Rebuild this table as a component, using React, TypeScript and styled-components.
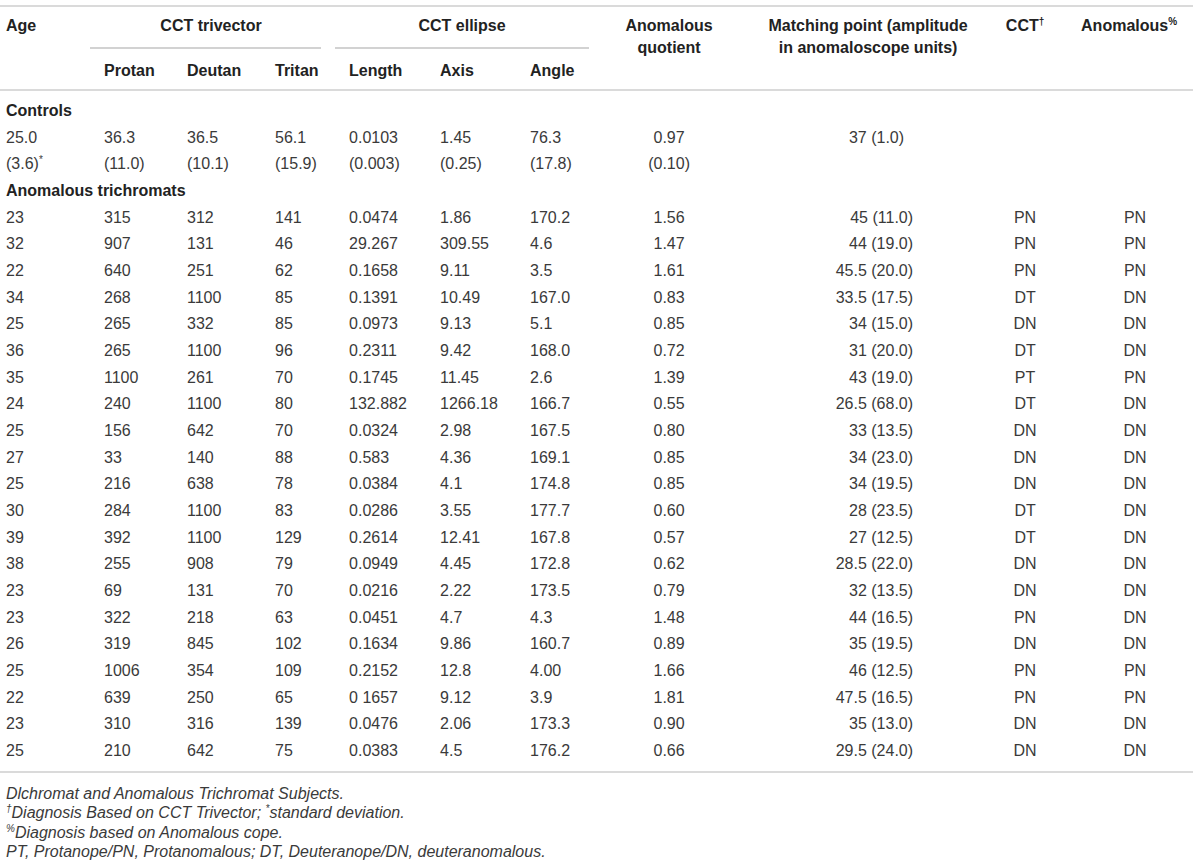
import React from "react";
import styled, { createGlobalStyle } from "styled-components";

const Global = createGlobalStyle`
  html, body { margin: 0; padding: 0; background: #fff; }
  body { font-family: "Liberation Sans", Arial, Helvetica, sans-serif; color: #3a3a3a; }
`;

const Page = styled.div`
  width: 1200px;
  padding-top: 5px;
`;

const Table = styled.table`
  width: 1193px;
  border-collapse: collapse;
  table-layout: fixed;
  font-size: 16px;
  border-top: 2px solid #dadada;
  border-bottom: 2px solid #dadada;
`;

type Align = "left" | "center" | "right";

const Th = styled.th<{ $align?: Align; $pl?: number; $pr?: number }>`
  font-weight: 700;
  color: #222;
  line-height: 22px;
  text-align: ${(p) => p.$align ?? "left"};
  vertical-align: top;
  padding: 8px ${(p) => p.$pr ?? 0}px 0 ${(p) => p.$pl ?? 0}px;
  border-bottom: 2px solid #dadada;
`;

const GroupTh = styled.th`
  font-weight: 700;
  color: #222;
  line-height: 22px;
  vertical-align: top;
  padding: 8px 14px 0 0;
`;

const GroupRule = styled.div<{ $pl?: number }>`
  text-align: center;
  padding: 0 0 10px ${(p) => p.$pl ?? 0}px;
  border-bottom: 2px solid #d2d2d2;
`;

const SubTh = styled.th`
  font-weight: 700;
  color: #222;
  line-height: 22px;
  text-align: left;
  vertical-align: top;
  padding: 11px 0 7px 14px;
  border-bottom: 2px solid #dadada;
`;

const Body = styled.tbody`
  tr:first-child td { padding-top: 7px; }
  tr:last-child td { padding-bottom: 6px; }
`;

const Td = styled.td<{ $align?: Align; $pl?: number; $pr?: number }>`
  line-height: 26.667px;
  white-space: nowrap;
  text-align: ${(p) => p.$align ?? "left"};
  padding: 0 ${(p) => p.$pr ?? 0}px 0 ${(p) => p.$pl ?? 0}px;
  color: #3a3a3a;
`;

const LabelCell = styled.td`
  line-height: 26.667px;
  font-weight: 700;
  color: #222;
  padding: 0 0 0 6px;
  white-space: nowrap;
`;

const Sup = styled.sup`
  font-size: 10px;
  line-height: 0;
  vertical-align: 6px;
`;

const Notes = styled.div`
  margin-top: 11px;
  padding-left: 6px;
  font-size: 16px;
  font-style: italic;
  line-height: 19.4px;
  color: #3a3a3a;
`;

const Note = styled.div``;

const colWidths = [90, 83, 88, 74, 91, 90, 87, 132, 250, 80, 128];

const colCfg: { $align?: Align; $pl?: number; $pr?: number }[] = [
  { $pl: 6 },
  { $pl: 14 },
  { $pl: 14 },
  { $pl: 14 },
  { $pl: 14 },
  { $pl: 14 },
  { $pl: 14 },
  { $align: "center" },
  { $align: "right", $pr: 72 },
  { $align: "center" },
  { $align: "center", $pl: 12 },
];

type Cell = React.ReactNode;

const controls: Cell[][] = [
  ["25.0", "36.3", "36.5", "56.1", "0.0103", "1.45", "76.3", "0.97", "37 (1.0)", "", ""],
  [
    <>
      (3.6)<Sup>*</Sup>
    </>,
    "(11.0)",
    "(10.1)",
    "(15.9)",
    "(0.003)",
    "(0.25)",
    "(17.8)",
    "(0.10)",
    "",
    "",
    "",
  ],
];

const raw = `23 315 312 141 0.0474 1.86 170.2 1.56 45|(11.0) PN PN
32 907 131 46 29.267 309.55 4.6 1.47 44|(19.0) PN PN
22 640 251 62 0.1658 9.11 3.5 1.61 45.5|(20.0) PN PN
34 268 1100 85 0.1391 10.49 167.0 0.83 33.5|(17.5) DT DN
25 265 332 85 0.0973 9.13 5.1 0.85 34|(15.0) DN DN
36 265 1100 96 0.2311 9.42 168.0 0.72 31|(20.0) DT DN
35 1100 261 70 0.1745 11.45 2.6 1.39 43|(19.0) PT PN
24 240 1100 80 132.882 1266.18 166.7 0.55 26.5|(68.0) DT DN
25 156 642 70 0.0324 2.98 167.5 0.80 33|(13.5) DN DN
27 33 140 88 0.583 4.36 169.1 0.85 34|(23.0) DN DN
25 216 638 78 0.0384 4.1 174.8 0.85 34|(19.5) DN DN
30 284 1100 83 0.0286 3.55 177.7 0.60 28|(23.5) DT DN
39 392 1100 129 0.2614 12.41 167.8 0.57 27|(12.5) DT DN
38 255 908 79 0.0949 4.45 172.8 0.62 28.5|(22.0) DN DN
23 69 131 70 0.0216 2.22 173.5 0.79 32|(13.5) DN DN
23 322 218 63 0.0451 4.7 4.3 1.48 44|(16.5) PN DN
26 319 845 102 0.1634 9.86 160.7 0.89 35|(19.5) DN DN
25 1006 354 109 0.2152 12.8 4.00 1.66 46|(12.5) PN PN
22 639 250 65 0_1657 9.12 3.9 1.81 47.5|(16.5) PN PN
23 310 316 139 0.0476 2.06 173.3 0.90 35|(13.0) DN DN
25 210 642 75 0.0383 4.5 176.2 0.66 29.5|(24.0) DN DN`;

const trichromats: string[][] = raw
  .split("\n")
  .map((line) => line.trim().split(" ").map((c) => c.replace("|", " ").replace("_", " ")));

const DataRow: React.FC<{ cells: Cell[]; padFix?: number }> = ({ cells, padFix }) => (
  <tr>
    {cells.map((c, i) => (
      <Td key={i} {...colCfg[i]} {...(i === 8 && padFix ? { $pr: padFix } : {})}>
        {c}
      </Td>
    ))}
  </tr>
);

export default function App() {
  return (
    <>
      <Global />
      <Page>
        <Table>
          <colgroup>
            {colWidths.map((w, i) => (
              <col key={i} style={{ width: w }} />
            ))}
          </colgroup>
          <thead>
            <tr>
              <Th rowSpan={2} $pl={6}>
                Age
              </Th>
              <GroupTh colSpan={3}>
                <GroupRule $pl={11}>CCT trivector</GroupRule>
              </GroupTh>
              <GroupTh colSpan={3}>
                <GroupRule>CCT ellipse</GroupRule>
              </GroupTh>
              <Th rowSpan={2} $align="center">
                Anomalous
                <br />
                quotient
              </Th>
              <Th rowSpan={2} $align="center" $pl={16}>
                Matching point (amplitude
                <br />
                in anomaloscope units)
              </Th>
              <Th rowSpan={2} $align="center">
                CCT<Sup>†</Sup>
              </Th>
              <Th rowSpan={2} $align="center">
                Anomalous<Sup>%</Sup>
              </Th>
            </tr>
            <tr>
              <SubTh>Protan</SubTh>
              <SubTh>Deutan</SubTh>
              <SubTh>Tritan</SubTh>
              <SubTh>Length</SubTh>
              <SubTh>Axis</SubTh>
              <SubTh>Angle</SubTh>
            </tr>
          </thead>
          <Body>
            <tr>
              <LabelCell colSpan={11}>Controls</LabelCell>
            </tr>
            <DataRow cells={controls[0]} padFix={81} />
            <DataRow cells={controls[1]} />
            <tr>
              <LabelCell colSpan={11}>Anomalous trichromats</LabelCell>
            </tr>
            {trichromats.map((r, i) => (
              <DataRow key={i} cells={r} />
            ))}
          </Body>
        </Table>
        <Notes>
          <Note>Dlchromat and Anomalous Trichromat Subjects.</Note>
          <Note>
            <Sup>†</Sup>Diagnosis Based on CCT Trivector; <Sup>*</Sup>standard deviation.
          </Note>
          <Note>
            <Sup>%</Sup>Diagnosis based on Anomalous cope.
          </Note>
          <Note>PT, Protanope/PN, Protanomalous; DT, Deuteranope/DN, deuteranomalous.</Note>
        </Notes>
      </Page>
    </>
  );
}
